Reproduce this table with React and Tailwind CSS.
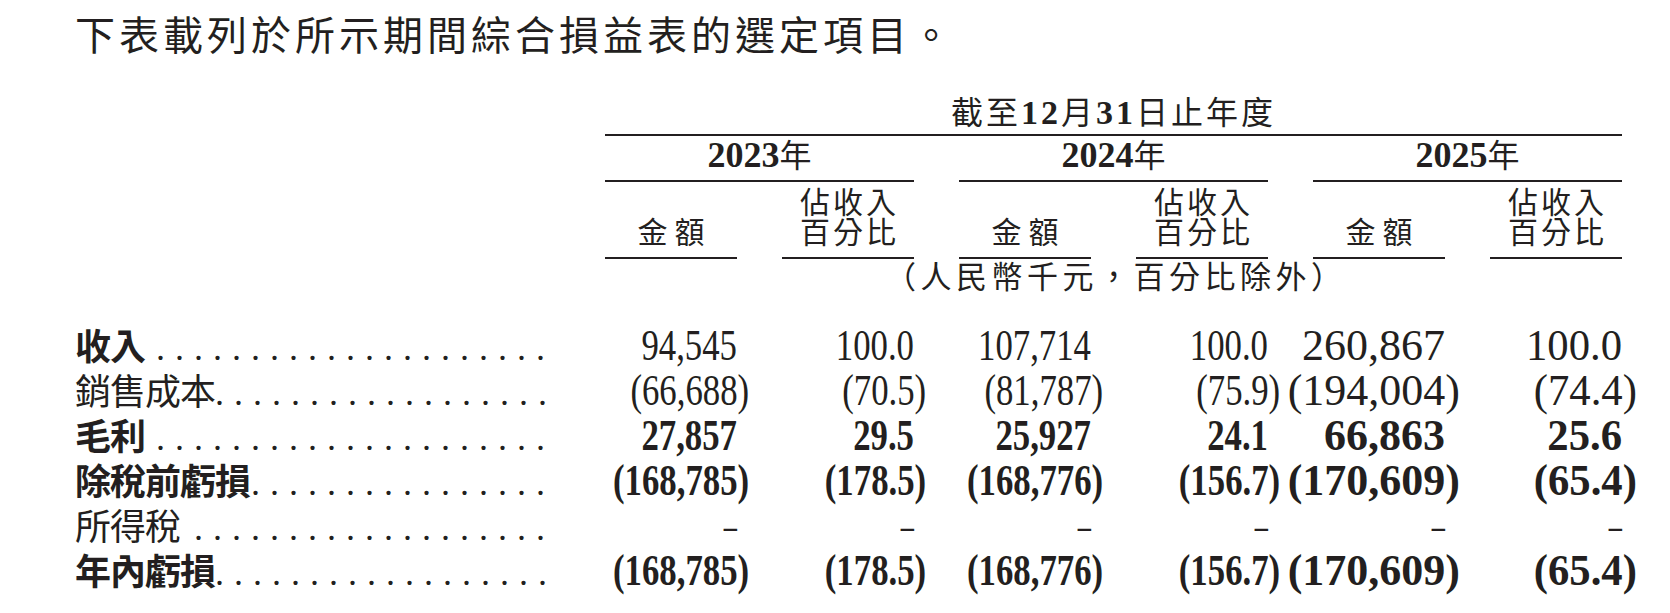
const cjk = "font-['Noto_Sans_CJK_TC','Noto_Sans_CJK_SC',sans-serif] [text-spacing-trim:space-all]";
const serif = "font-['Liberation_Serif','Times_New_Roman',serif]";
const cols = 'grid grid-cols-[485px_repeat(6,132px)] gap-x-[45px]';

// cols 1-4 are set in a condensed face in the source, 2025 is not
const scales = [
    'scale-x-[0.79]',
    'scale-x-[0.79]',
    'scale-x-[0.79]',
    'scale-x-[0.79]',
    'scale-x-100',
    'scale-x-[0.97]',
];

const rows = [
    { label: '收入', bold: true, numBold: false, dots: 21, vals: ['94,545', '100.0', '107,714', '100.0', '260,867', '100.0'] },
    { label: '銷售成本', bold: false, numBold: false, dots: 18, vals: ['(66,688)', '(70.5)', '(81,787)', '(75.9)', '(194,004)', '(74.4)'] },
    { label: '毛利', bold: true, numBold: true, dots: 21, vals: ['27,857', '29.5', '25,927', '24.1', '66,863', '25.6'] },
    { label: '除稅前虧損', bold: true, numBold: true, dots: 16, vals: ['(168,785)', '(178.5)', '(168,776)', '(156.7)', '(170,609)', '(65.4)'] },
    { label: '所得稅', bold: false, numBold: false, dots: 19, vals: ['–', '–', '–', '–', '–', '–'] },
    { label: '年內虧損', bold: true, numBold: true, dots: 18, vals: ['(168,785)', '(178.5)', '(168,776)', '(156.7)', '(170,609)', '(65.4)'] },
];

const unitNote = '（人民幣千元，百分比除外）';

function Num({ v, bold, scale }) {
    if (v === '–') {
        return <span className="inline-block shrink-0 origin-right scale-x-[0.6]">–</span>;
    }
    const open = v.startsWith('(');
    const body = open ? v.slice(0, -1) : v;
    return (
        <span className={`inline-block shrink-0 whitespace-nowrap origin-right ${scale} ${bold ? 'font-bold' : ''}`}>
            {body}
            {open && <span className="mr-[-15px]">)</span>}
        </span>
    );
}

function Row({ row }) {
    return (
        <div className={`${cols} h-[45px]`}>
            <div className="flex justify-between pr-[5px]">
                <span
                    className={`${cjk} whitespace-nowrap text-[36px] leading-[45px] tracking-[-1px] ${row.bold ? 'font-bold' : 'font-normal'}`}
                >
                    {row.label}
                </span>
                <span className={`${serif} whitespace-nowrap pt-[3.5px] text-[36px] leading-[45px] tracking-[10px]`}>
                    {'.'.repeat(row.dots)}
                </span>
            </div>
            {row.vals.map((v, i) => (
                <div key={i} className={`${serif} flex justify-end pt-[1px] text-[44px] leading-[45px]`}>
                    <Num v={v} bold={row.numBold} scale={scales[i]} />
                </div>
            ))}
        </div>
    );
}

function SubHead({ first, pct }) {
    return (
        <div
            className={`${first ? 'col-start-2' : ''} flex h-[77px] flex-col items-center justify-end border-b-2 border-[#231f20] pb-[12px] ${cjk} text-[30px] leading-[30px]`}
        >
            {pct ? (
                <>
                    <span className="pl-[3px] tracking-[3px]">佔收入</span>
                    <span className="pl-[3px] tracking-[3px]">百分比</span>
                </>
            ) : (
                <span className="pl-[7px] tracking-[7px]">金額</span>
            )}
        </div>
    );
}

function Year({ y, first }) {
    return (
        <div
            className={`${first ? 'col-start-2' : ''} col-span-2 h-[46px] border-b-2 border-[#231f20] pt-[1px] text-center ${cjk} text-[32px] leading-[32px]`}
        >
            <span className={`${serif} text-[36px] font-bold`}>{y}</span>年
        </div>
    );
}

export default function App() {
    return (
        <div className="h-[613px] w-[1670px] overflow-hidden bg-white pt-[13px] pl-[75px] text-[#231f20]">
            <p className={`${cjk} text-[40px] leading-[40px] tracking-[4px]`}>
                下表載列於所示期間綜合損益表的選定項目。
            </p>

            <div className={cols}>
                <div
                    className={`col-span-6 col-start-2 flex h-[83px] items-end justify-center border-b-2 border-[#231f20] pb-[5.5px] ${cjk} text-[32px] leading-[32px] tracking-[3px]`}
                >
                    <span>
                        截至<span className={`${serif} text-[34px] font-bold`}>12</span>月
                        <span className={`${serif} text-[34px] font-bold`}>31</span>日止年度
                    </span>
                </div>

                <Year y="2023" first />
                <Year y="2024" />
                <Year y="2025" />

                <SubHead first />
                <SubHead pct />
                <SubHead />
                <SubHead pct />
                <SubHead />
                <SubHead pct />

                {/* fixed pitch per glyph, the source sets this note on a grid */}
                <div className={`col-span-6 col-start-2 flex justify-center ${cjk} text-[31px] leading-[31px]`}>
                    {[...unitNote].map((c, i) => (
                        <span key={i} className="w-[35.5px] shrink-0 text-center">
                            {c}
                        </span>
                    ))}
                </div>
            </div>

            <div className="mt-[32px]">
                {rows.map((r) => (
                    <Row key={r.label} row={r} />
                ))}
            </div>
        </div>
    );
}
